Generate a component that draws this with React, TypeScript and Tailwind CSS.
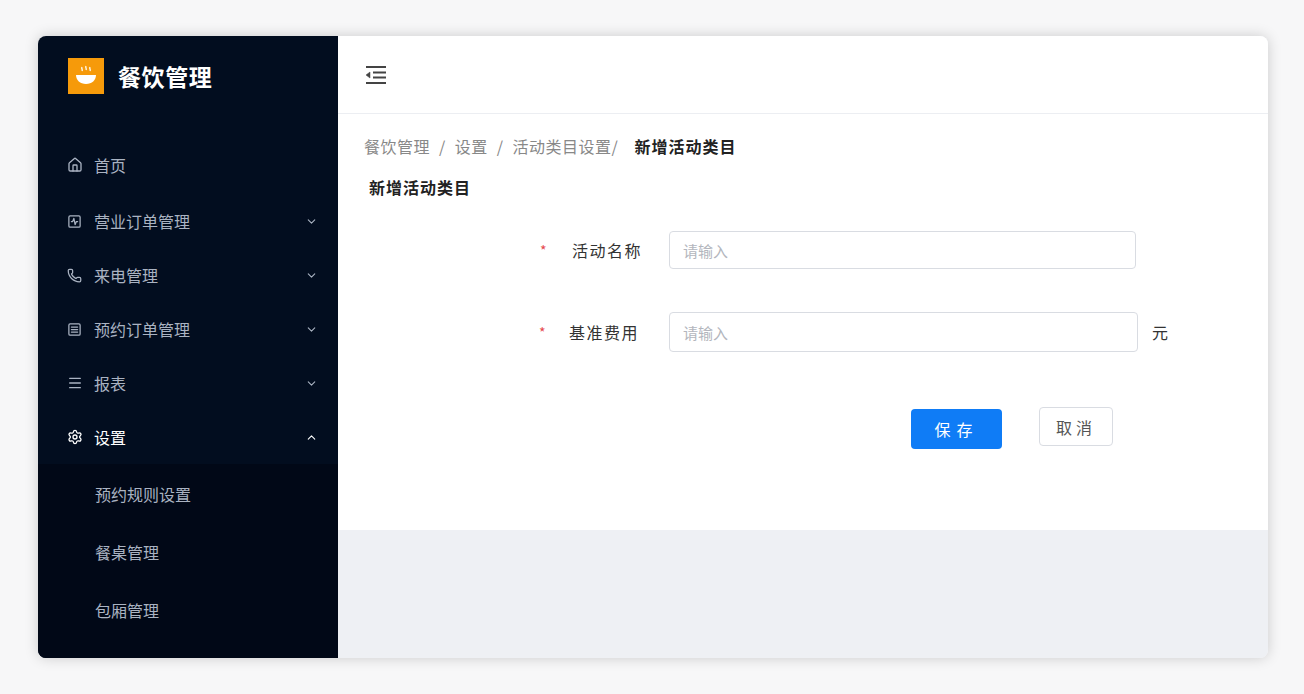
import { Home, ChevronDown, ChevronUp, Phone, Menu, Settings, SquareActivity, SquareMenu } from "lucide-react";

const font = { fontFamily: '"Noto Sans CJK SC", "Noto Sans", sans-serif' };

const menu = [
  { icon: <Home size={16} />, label: "首页", arrow: false },
  { icon: <SquareActivity size={15} />, label: "营业订单管理", arrow: true },
  { icon: <Phone size={15} />, label: "来电管理", arrow: true },
  { icon: <SquareMenu size={15} />, label: "预约订单管理", arrow: true },
  { icon: <Menu size={16} />, label: "报表", arrow: true },
];

export default function App() {
  return (
    <div className="w-[1304px] h-[694px] bg-[#f7f7f8] pt-[36px] pl-[38px]" style={font}>
      <div className="w-[1230px] h-[622px] rounded-lg overflow-hidden shadow-[0_0_14px_rgba(0,0,0,0.18)] flex">
        <aside className="w-[300px] shrink-0 bg-[#020d1f] flex flex-col">
          <div className="h-[80px] flex items-center pl-[30px] gap-[14px]">
            <div className="w-[36px] h-[36px] bg-[#f69a0a] flex items-center justify-center">
              <svg width="24" height="22" viewBox="0 0 24 22" fill="none">
                <path d="M8 2c-1 1.5 1 2.5 0 4M12 1c-1 1.5 1 2.5 0 4M16 2c-1 1.5 1 2.5 0 4" stroke="white" strokeWidth="1.3" />
                <path d="M2 10h20c0 5-4 9-10 9S2 15 2 10z" fill="white" />
              </svg>
            </div>
            <span className="text-white text-[23px] font-bold tracking-wide">餐饮管理</span>
          </div>
          <div className="mt-[20px] flex flex-col">
            {menu.map((m, i) => (
              <div key={m.label} className={`${i === 0 ? "h-[58px]" : "h-[54px]"} flex items-center pl-[29px] pr-[20px] text-[#aab3c2] text-[16px]`}>
                <span className="w-[20px] flex">{m.icon}</span>
                <span className="ml-[7px] flex-1">{m.label}</span>
                {m.arrow && <ChevronDown size={13} />}
              </div>
            ))}
            <div className="h-[54px] flex items-center pl-[29px] pr-[20px] text-white text-[16px]">
              <span className="w-[20px] flex"><Settings size={16} /></span>
              <span className="ml-[7px] flex-1">设置</span>
              <ChevronUp size={13} />
            </div>
          </div>
          <div className="flex-1 bg-[#010817] flex flex-col pt-[1px]">
            {["预约规则设置", "餐桌管理", "包厢管理"].map((s) => (
              <div key={s} className="h-[58px] flex items-center pl-[57px] text-[#aab3c2] text-[16px]">{s}</div>
            ))}
          </div>
        </aside>
        <main className="flex-1 flex flex-col bg-[#eef0f4]">
          <header className="h-[78px] bg-white border-b border-[#eceef2] flex items-center pl-[27px] text-[#444]">
            <svg width="22" height="20" viewBox="0 0 22 20" fill="none" stroke="currentColor" strokeWidth="2">
              <path d="M1 2h20M8 7.5h13M8 12.5h13M1 18h20" />
              <path d="M5 7v6L1 10z" fill="currentColor" strokeWidth="0.5" />
            </svg>
          </header>
          <section className="h-[416px] bg-white pl-[26px] pt-[20px]">
            <div className="text-[16px] text-[#888] flex items-center tracking-[0.5px]">
              <span>餐饮管理</span><span className="mx-[9px]">/</span>
              <span>设置</span><span className="mx-[9px]">/</span>
              <span>活动类目设置/</span>
              <span className="ml-[16px] text-[#222] font-bold tracking-[1px]">新增活动类目</span>
            </div>
            <div className="mt-[17px] ml-[5px] text-[16px] font-bold text-[#222] tracking-[1px]">新增活动类目</div>
            <div className="mt-[32px] flex items-center">
              <div className="w-[305px] flex items-center justify-end pr-[27px] text-[16px] text-[#333] tracking-[1.5px]">
                <span className="text-[#e5484d] mr-[24px] text-[14px]">*</span>活动名称
              </div>
              <input placeholder="请输入" className="w-[467px] h-[38px] border border-[#d9dce2] rounded px-[13px] text-[15px] placeholder-[#b3b6bd] outline-none" />
            </div>
            <div className="mt-[43px] flex items-center">
              <div className="w-[305px] flex items-center justify-end pr-[30px] text-[16px] text-[#333] tracking-[1.5px]">
                <span className="text-[#e5484d] mr-[22px] text-[14px]">*</span>基准费用
              </div>
              <input placeholder="请输入" className="w-[469px] h-[40px] border border-[#d9dce2] rounded px-[13px] text-[15px] placeholder-[#b3b6bd] outline-none" />
              <span className="ml-[14px] text-[16px] text-[#333]">元</span>
            </div>
            <div className="mt-[57px] flex items-start pl-[547px] gap-[37px]">
              <button className="w-[91px] h-[40px] bg-[#0f7cf6] text-white rounded text-[16px] tracking-[6px]">保存</button>
              <button className="-mt-[2px] w-[74px] h-[39px] border border-[#d9dce2] rounded text-[16px] text-[#555] tracking-[4px] bg-white">取消</button>
            </div>
          </section>
        </main>
      </div>
    </div>
  );
}
